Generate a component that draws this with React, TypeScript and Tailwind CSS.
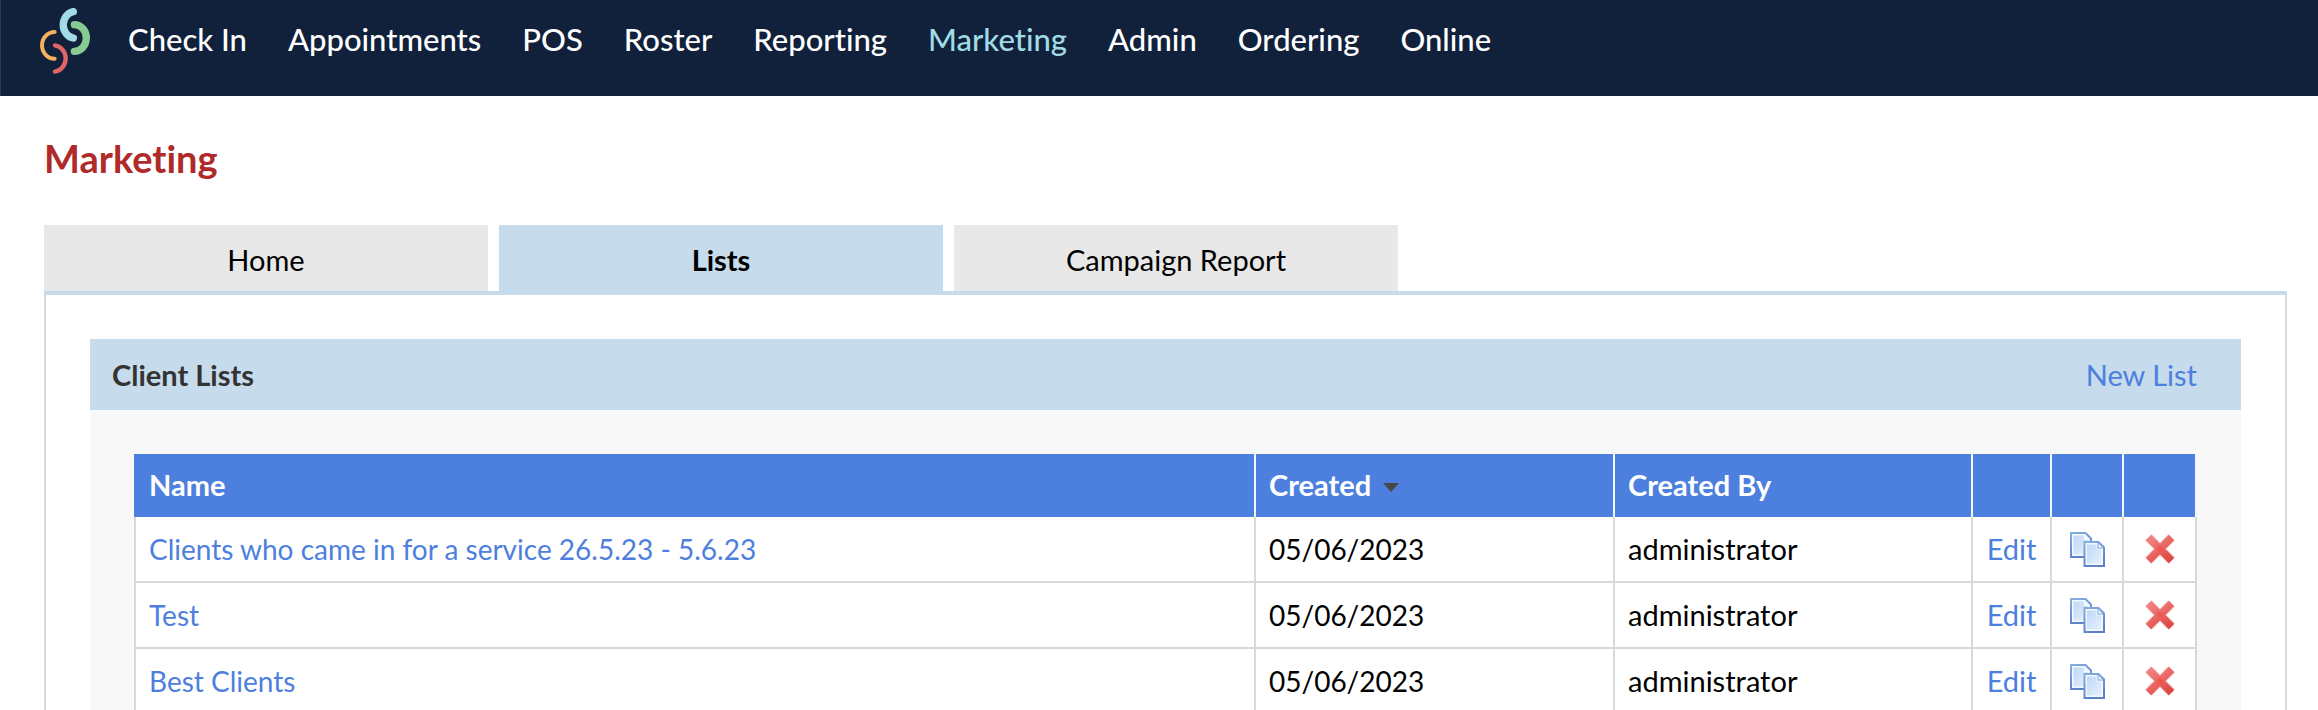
const navItems = [
  'Check In',
  'Appointments',
  'POS',
  'Roster',
  'Reporting',
  'Marketing',
  'Admin',
  'Ordering',
  'Online',
];

const tabs = ['Home', 'Lists', 'Campaign Report'];

const lists = [
  { name: 'Clients who came in for a service 26.5.23 - 5.6.23', created: '05/06/2023', createdBy: 'administrator' },
  { name: 'Test', created: '05/06/2023', createdBy: 'administrator' },
  { name: 'Best Clients', created: '05/06/2023', createdBy: 'administrator' },
];

function Logo() {
  return (
    <svg viewBox="0 0 150 198" className="block h-[66px] w-[50px]" fill="none" strokeLinecap="round" aria-hidden="true">
      <path d="M44 72A38 40 0 0 0 44 152" stroke="#f5b060" strokeWidth="12" />
      <path d="M45 112A38 40 0 0 1 45 191" stroke="#e36666" strokeWidth="13" />
      <path d="M100 11A36 40 0 0 0 100 90" stroke="#a0dbe6" strokeWidth="22" />
      <path d="M103 50A36 40 0 0 1 103 130" stroke="#88cb92" strokeWidth="22" />
    </svg>
  );
}

function CopyIcon() {
  return (
    <svg viewBox="0 0 35 35" className="h-[35px] w-[35px]" aria-hidden="true">
      <defs>
        <linearGradient id="page" x1="0" y1="0" x2="1" y2="1">
          <stop offset="0" stopColor="#bfd8f6" />
          <stop offset="1" stopColor="#e6f0fe" />
        </linearGradient>
        <linearGradient id="pageBorder" x1="0" y1="0" x2="0.4" y2="1">
          <stop offset="0" stopColor="#86aede" />
          <stop offset="1" stopColor="#5c80c9" />
        </linearGradient>
      </defs>
      <path d="M1 1H15.500L21 6.500V25H1Z" fill="#f4f9ff" stroke="url(#pageBorder)" strokeWidth="2" />
      <path d="M3.500 3.500H14V8H18V22.500H3.500Z" fill="url(#page)" />
      <path d="M14.500 10H28.500L34 15.500V34H14.500Z" fill="#f4f9ff" stroke="url(#pageBorder)" strokeWidth="2" />
      <path d="M17 12.500H26.500V17.500H31.500V31.500H17Z" fill="url(#page)" />
      <path d="M28 11V16H33" fill="none" stroke="#9fc2ea" strokeWidth="1.500" />
    </svg>
  );
}

function DeleteIcon() {
  return (
    <svg viewBox="2 2 26 26" className="h-[30px] w-[30px]" fill="none" strokeLinejoin="round" aria-hidden="true">
      <defs>
        <linearGradient id="cross" gradientUnits="userSpaceOnUse" x1="6" y1="4" x2="22" y2="28">
          <stop offset="0" stopColor="#ef8583" />
          <stop offset="0.500" stopColor="#e96562" />
          <stop offset="1" stopColor="#dc423d" />
        </linearGradient>
      </defs>
      <path d="M5 5L25 25M25 5L5 25" stroke="#f6c3c1" strokeWidth="8" />
      <path d="M5 5L25 25M25 5L5 25" stroke="url(#cross)" strokeWidth="6.500" />
      <path d="M12 15L15 12L18 15L15 18Z" fill="#ef5552" />
    </svg>
  );
}

function TopNav() {
  return (
    <header className="flex h-24 items-center border-l border-[#2b3a54] bg-[#11213b] pb-3.5 pl-[39px]">
      <a href="#" aria-label="Dashboard">
        <Logo />
      </a>
      <nav className="ml-[38px] flex gap-[41px] pb-1 text-[31px] leading-9 font-medium">
        {navItems.map((item) => (
          <a key={item} href="#" className={item === 'Marketing' ? 'text-[#a0dbe6]' : 'text-white'}>
            {item}
          </a>
        ))}
      </nav>
    </header>
  );
}

function ListsTable() {
  return (
    <table className="w-full table-fixed border-separate border-spacing-0">
      <colgroup>
        <col />
        <col className="w-[359px]" />
        <col className="w-[358px]" />
        <col className="w-[79px]" />
        <col className="w-[72px]" />
        <col className="w-[73px]" />
      </colgroup>
      <thead>
        <tr className="h-[63px] text-left text-white [&>th]:border-r-2 [&>th]:border-[#f1f6fd] [&>th]:bg-[#4d80de] [&>th]:bg-clip-padding [&>th]:px-[13px] [&>th]:pb-0.5">
          <th className="border-l-2 border-l-[#4d80de]! bg-clip-border!">Name</th>
          <th>
            <button type="button" className="flex items-center gap-3 font-bold">
              Created
              <svg viewBox="0 0 16 9" className="mt-1.5 h-[9px] w-4" aria-hidden="true">
                <path d="M0 0H16L8 9Z" fill="#474747" />
              </svg>
            </button>
          </th>
          <th>Created By</th>
          <th aria-label="Edit" />
          <th aria-label="Copy" />
          <th aria-label="Delete" />
        </tr>
      </thead>
      <tbody>
        {lists.map((list) => (
          <tr key={list.name} className="h-[66px] bg-white [&>td]:border-r-2 [&>td]:border-b-2 [&>td]:border-[#d8d8d8]">
            <td className="border-l-2 px-[13px] text-[28px]">
              <a href="#" className="text-[#4d80de]">{list.name}</a>
            </td>
            <td className="px-[13px] text-[28px]">{list.created}</td>
            <td className="px-[13px]">{list.createdBy}</td>
            <td className="text-center">
              <a href="#" className="text-[#4d80de]">Edit</a>
            </td>
            <td>
              <button type="button" aria-label={`Copy ${list.name}`} className="mx-auto block">
                <CopyIcon />
              </button>
            </td>
            <td>
              <button type="button" aria-label={`Delete ${list.name}`} className="mx-auto block">
                <DeleteIcon />
              </button>
            </td>
          </tr>
        ))}
      </tbody>
    </table>
  );
}

export default function App() {
  return (
    <div className="h-screen overflow-hidden bg-white font-[Lato,sans-serif] text-[29px] leading-9 text-black [font-variant-ligatures:none]">
      <TopNav />
      <main className="pt-[38px] pr-[31px] pl-11">
        <h1 className="mb-[43px] text-[38px] leading-12 font-bold text-[#b02a2a]">Marketing</h1>

        <div role="tablist" className="flex gap-[11px]">
          {tabs.map((tab) => (
            <button
              key={tab}
              type="button"
              role="tab"
              aria-selected={tab === 'Lists'}
              className={`h-[66px] w-[444px] pt-1 ${tab === 'Lists' ? 'bg-[#c6dbeb] font-bold' : 'bg-[#e8e8e8]'}`}
            >
              {tab}
            </button>
          ))}
        </div>

        <div className="border-t-4 border-[#c6dbeb]">
          <div className="border-x-2 border-[#d8d8d8] p-11">
            <section className="bg-[#f8f8f8]">
              <div className="flex h-[71px] items-center justify-between bg-[#c6dbeb] pr-11 pl-[22px]">
                <h2 className="font-bold text-[#333333]">Client Lists</h2>
                <a href="#" className="text-[#4d80de]">New List</a>
              </div>
              <div className="p-11">
                <ListsTable />
              </div>
            </section>
          </div>
        </div>
      </main>
    </div>
  );
}
